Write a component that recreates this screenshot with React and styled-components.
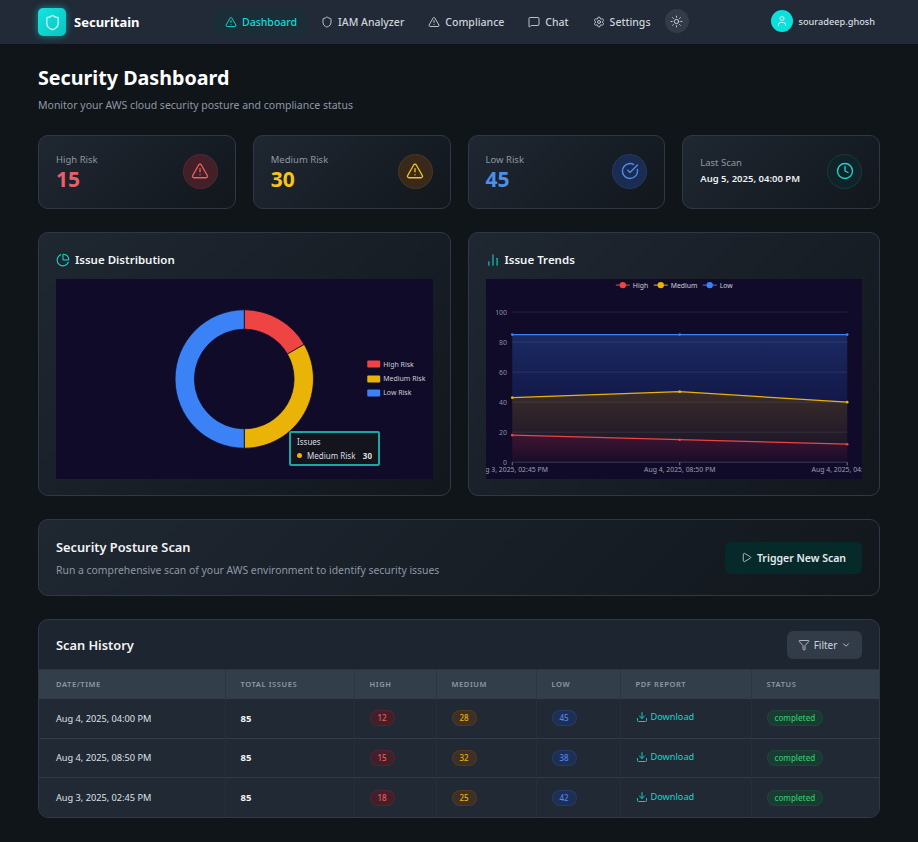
import React from 'react'
import styled, { createGlobalStyle } from 'styled-components'
import {
  TriangleAlert, Shield, MessageSquare, Settings, Sun, User, CircleCheckBig, Clock,
  ChartPie, ChartNoAxesColumn, Play, Filter, ChevronDown, Download,
} from 'lucide-react'

const GlobalStyle = createGlobalStyle`
  * { box-sizing: border-box; }
  html, body { margin: 0; padding: 0; background: #10151a; }
  body { font-family: "Noto Sans", "Open Sans", sans-serif; color: #fff; }
`

const navItems = [
  { label: 'Dashboard', icon: TriangleAlert, active: true },
  { label: 'IAM Analyzer', icon: Shield },
  { label: 'Compliance', icon: TriangleAlert },
  { label: 'Chat', icon: MessageSquare },
  { label: 'Settings', icon: Settings },
]

const stats = [
  { label: 'High Risk', value: 15, color: '#e8606a', bg: '#431f27', ring: '#55292f', icon: TriangleAlert },
  { label: 'Medium Risk', value: 30, color: '#f5c518', bg: '#38291c', ring: '#4a381f', icon: TriangleAlert },
  { label: 'Low Risk', value: 45, color: '#4f8fe8', bg: '#1a2c52', ring: '#223a66', icon: CircleCheckBig },
]

const rows = [
  { date: 'Aug 4, 2025, 04:00 PM', total: 85, high: 12, medium: 28, low: 45 },
  { date: 'Aug 4, 2025, 08:50 PM', total: 85, high: 15, medium: 32, low: 38 },
  { date: 'Aug 3, 2025, 02:45 PM', total: 85, high: 18, medium: 25, low: 42 },
]

const columns = [
  ['DATE/TIME', 186], ['TOTAL ISSUES', 129], ['HIGH', 82], ['MEDIUM', 100],
  ['LOW', 84], ['PDF REPORT', 131], ['STATUS', 128],
]

const tones = {
  high: { bg: '#41202a', border: '#4f262f', color: '#ee5a5f' },
  medium: { bg: '#3d3025', border: '#4c3a24', color: '#eab308' },
  low: { bg: '#1e2f55', border: '#253a66', color: '#4f85e6' },
  done: { bg: '#1b3a34', border: '#1f4438', color: '#34c46e' },
}

const polar = (cx, cy, r, deg) => {
  const a = ((deg - 90) * Math.PI) / 180
  return [cx + r * Math.cos(a), cy + r * Math.sin(a)]
}

const ringSlice = (cx, cy, r0, r1, from, to) => {
  const large = to - from > 180 ? 1 : 0
  const [x1, y1] = polar(cx, cy, r1, from)
  const [x2, y2] = polar(cx, cy, r1, to)
  const [x3, y3] = polar(cx, cy, r0, to)
  const [x4, y4] = polar(cx, cy, r0, from)
  return `M${x1} ${y1}A${r1} ${r1} 0 ${large} 1 ${x2} ${y2}L${x3} ${y3}A${r0} ${r0} 0 ${large} 0 ${x4} ${y4}Z`
}

const DonutChart = () => (
  <ChartSvg viewBox="0 0 378 200">
    <path d={ringSlice(189, 100, 50, 69.5, 0, 60)} fill="#ef4444" stroke="#100b29" strokeWidth="0.8" />
    <path d={ringSlice(189, 100, 50, 69.5, 60, 180)} fill="#eab308" stroke="#100b29" strokeWidth="0.8" />
    <path d={ringSlice(189, 100, 50, 69.5, 180, 360)} fill="#3b82f6" stroke="#100b29" strokeWidth="0.8" />
    {[['High Risk', '#ef4444', 85], ['Medium Risk', '#eab308', 100], ['Low Risk', '#3b82f6', 114]].map(([name, fill, y]) => (
      <g key={name}>
        <rect x="312.5" y={y - 3.5} width="13" height="7" rx="1" fill={fill} />
        <LegendText x="328.5" y={y + 2.5} fill="#c9ced6">{name}</LegendText>
      </g>
    ))}
  </ChartSvg>
)

const xs = [26.3, 194, 361.7]
const toY = (v) => 183.3 - v * 1.503
const linePts = (vals) => vals.map((v, i) => `${xs[i]},${toY(v)}`).join(' ')

const TrendChart = () => {
  const high = [18, 15, 12]
  const medium = [43, 47, 40]
  const low = [85, 85, 85]
  return (
    <ChartSvg viewBox="0 0 377 200">
      <defs>
        <linearGradient id="lowFill" x1="0" y1="0" x2="0" y2="1">
          <stop offset="0" stopColor="#1b2a63" />
          <stop offset="1" stopColor="#131848" />
        </linearGradient>
        <linearGradient id="medFill" x1="0" y1="0" x2="0" y2="1">
          <stop offset="0" stopColor="#3a2c2a" />
          <stop offset="1" stopColor="#1e1728" />
        </linearGradient>
        <linearGradient id="highFill" x1="0" y1="0" x2="0" y2="1">
          <stop offset="0" stopColor="#3f1430" />
          <stop offset="1" stopColor="#170d2a" />
        </linearGradient>
      </defs>
      <polygon points={`${linePts(low)} 361.7,${toY(medium[2])} 194,${toY(medium[1])} 26.3,${toY(medium[0])}`} fill="url(#lowFill)" />
      <polygon points={`${linePts(medium)} 361.7,${toY(high[2])} 194,${toY(high[1])} 26.3,${toY(high[0])}`} fill="url(#medFill)" />
      <polygon points={`${linePts(high)} 361.7,${toY(0)} 26.3,${toY(0)}`} fill="url(#highFill)" />
      {[100, 80, 60, 40, 20, 0].map((v) => (
        <g key={v}>
          <line x1="26.3" x2="361.7" y1={toY(v)} y2={toY(v)} stroke="#8a8fa8" strokeOpacity={v === 0 ? 0.45 : 0.22} strokeWidth="0.8" />
          <ChartText x="21" y={toY(v) + 2.5} fill="#8b90a3" textAnchor="end">{v}</ChartText>
        </g>
      ))}
      {[[high, '#ef4444'], [medium, '#eab308'], [low, '#3b82f6']].map(([vals, color]) => (
        <g key={color}>
          <polyline points={linePts(vals)} fill="none" stroke={color} strokeWidth="1.3" />
          {vals.map((v, i) => <circle key={i} cx={xs[i]} cy={toY(v)} r="1.3" fill={color} />)}
        </g>
      ))}
      {xs.map((x) => <line key={x} x1={x} x2={x} y1="183.3" y2="186.5" stroke="#8a8fa8" strokeWidth="0.8" />)}
      <ChartText x="26.3" y="193.5" fill="#9aa0b0" textAnchor="middle">Aug 3, 2025, 02:45 PM</ChartText>
      <ChartText x="194" y="193.5" fill="#9aa0b0" textAnchor="middle">Aug 4, 2025, 08:50 PM</ChartText>
      <ChartText x="361.7" y="193.5" fill="#9aa0b0" textAnchor="middle">Aug 4, 2025, 04:00 PM</ChartText>
      {[['High', '#ef4444', 137], ['Medium', '#eab308', 175], ['Low', '#3b82f6', 224]].map(([name, color, x]) => (
        <g key={name}>
          <line x1={x - 7} x2={x + 7} y1="6" y2="6" stroke={color} strokeWidth="1" />
          <circle cx={x} cy="6" r="3.2" fill={color} />
          <ChartText x={x + 10} y="8.5" fill="#c9ced6">{name}</ChartText>
        </g>
      ))}
    </ChartSvg>
  )
}

export default function App() {
  return (
    <>
      <GlobalStyle />
      <Header>
        <Brand>
          <LogoMark><Shield size={17} strokeWidth={2} /></LogoMark>
          <BrandName>Securitain</BrandName>
        </Brand>
        <Nav>
          {navItems.map(({ label, icon: Icon, active }) => (
            <NavLink key={label} $active={active}>
              <Icon size={12} strokeWidth={1.8} />
              {label}
            </NavLink>
          ))}
          <ThemeButton><Sun size={13} strokeWidth={1.8} /></ThemeButton>
        </Nav>
        <UserBox>
          <Avatar><User size={12} strokeWidth={2} /></Avatar>
          <UserName>souradeep.ghosh</UserName>
        </UserBox>
      </Header>

      <Main>
        <PageTitle>Security Dashboard</PageTitle>
        <PageSub>Monitor your AWS cloud security posture and compliance status</PageSub>

        <StatGrid>
          {stats.map(({ label, value, color, bg, ring, icon: Icon }) => (
            <StatCard key={label}>
              <StatText>
                <StatLabel>{label}</StatLabel>
                <StatValue $color={color}>{value}</StatValue>
              </StatText>
              <IconCircle $bg={bg} $ring={ring} $color={color}><Icon size={18} strokeWidth={1.8} /></IconCircle>
            </StatCard>
          ))}
          <StatCard>
            <LastScanText>
              <StatLabel>Last Scan</StatLabel>
              <ScanDate>Aug 5, 2025, 04:00 PM</ScanDate>
            </LastScanText>
            <IconCircle $bg="#102329" $ring="#173a3c" $color="#1fd6cf"><Clock size={18} strokeWidth={1.8} /></IconCircle>
          </StatCard>
        </StatGrid>

        <ChartGrid>
          <Panel>
            <PanelTitle><ChartPie size={14} strokeWidth={1.8} />Issue Distribution</PanelTitle>
            <ChartBox>
              <DonutChart />
              <Tooltip>
                <TooltipHead>Issues</TooltipHead>
                <TooltipRow>
                  <TooltipDot />
                  Medium Risk
                  <TooltipValue>30</TooltipValue>
                </TooltipRow>
              </Tooltip>
            </ChartBox>
          </Panel>
          <Panel>
            <PanelTitle><ChartNoAxesColumn size={14} strokeWidth={1.8} />Issue Trends</PanelTitle>
            <ChartBox>
              <TrendChart />
            </ChartBox>
          </Panel>
        </ChartGrid>

        <ScanCard>
          <div>
            <ScanTitle>Security Posture Scan</ScanTitle>
            <ScanText>Run a comprehensive scan of your AWS environment to identify security issues</ScanText>
          </div>
          <TriggerButton><Play size={11} strokeWidth={1.6} />Trigger New Scan</TriggerButton>
        </ScanCard>

        <HistoryCard>
          <HistoryHead>
            <ScanTitle as="h2">Scan History</ScanTitle>
            <FilterButton>
              <Filter size={12} strokeWidth={1.6} />
              Filter
              <ChevronDown size={10} strokeWidth={2} />
            </FilterButton>
          </HistoryHead>
          <Table>
            <colgroup>
              {columns.map(([name, w]) => <col key={name} width={w} />)}
            </colgroup>
            <thead>
              <tr>{columns.map(([name]) => <Th key={name}>{name}</Th>)}</tr>
            </thead>
            <tbody>
              {rows.map((r) => (
                <tr key={r.date}>
                  <Td>{r.date}</Td>
                  <Td><strong>{r.total}</strong></Td>
                  <Td><Badge $tone="high">{r.high}</Badge></Td>
                  <Td><Badge $tone="medium">{r.medium}</Badge></Td>
                  <Td><Badge $tone="low">{r.low}</Badge></Td>
                  <Td><DownloadLink><Download size={12} strokeWidth={1.8} />Download</DownloadLink></Td>
                  <Td><Badge $tone="done">completed</Badge></Td>
                </tr>
              ))}
            </tbody>
          </Table>
        </HistoryCard>
      </Main>
    </>
  )
}

const Header = styled.header`
  height: 44px;
  background: #212a36;
  display: flex;
  align-items: center;
  padding: 0 43px 0 38px;
`
const Brand = styled.div`
  display: flex;
  align-items: center;
  gap: 8px;
  width: 175px;
`
const LogoMark = styled.div`
  width: 28px;
  height: 28px;
  border-radius: 5px;
  background: linear-gradient(135deg, #13e4e0, #0bc4c0);
  box-shadow: 0 0 7px rgba(20, 230, 225, 0.55);
  color: #b9f3f0;
  display: flex;
  align-items: center;
  justify-content: center;
`
const BrandName = styled.span`
  font-size: 13px;
  font-weight: 700;
`
const Nav = styled.nav`
  display: flex;
  align-items: center;
  gap: 1px;
`
const NavLink = styled.a`
  height: 27px;
  padding: 0 11px 0 12px;
  border-radius: 6px;
  display: flex;
  align-items: center;
  gap: 5px;
  font-size: 10.5px;
  font-weight: 500;
  color: ${(p) => (p.$active ? '#14dcd6' : '#cdd3db')};
  background: ${(p) => (p.$active ? '#1b2d37' : 'transparent')};
`
const ThemeButton = styled.button`
  width: 24px;
  height: 24px;
  margin: 0 0 2px 2px;
  padding: 0;
  border: none;
  border-radius: 50%;
  background: #323b47;
  color: #cdd3db;
  display: flex;
  align-items: center;
  justify-content: center;
`
const UserBox = styled.div`
  margin-left: auto;
  margin-bottom: 2px;
  display: flex;
  align-items: center;
  gap: 5px;
`
const Avatar = styled.div`
  width: 22px;
  height: 22px;
  border-radius: 50%;
  background: #0de0dc;
  color: #c6f6f4;
  display: flex;
  align-items: center;
  justify-content: center;
`
const UserName = styled.span`
  font-size: 9.2px;
  font-weight: 500;
  color: #d8dce2;
`
const Main = styled.main`
  padding: 20px 38px 24px;
`
const PageTitle = styled.h1`
  margin: 0;
  font-size: 19.7px;
  line-height: 28px;
  font-weight: 700;
`
const PageSub = styled.p`
  margin: 6px 0 0;
  font-size: 10.5px;
  line-height: 15px;
  color: #8e98a5;
`
const cardSurface = `
  border: 1px solid #2f3844;
  border-radius: 10px;
  background: linear-gradient(135deg, #1f2731 0%, #12171d 100%);
`
const StatGrid = styled.section`
  margin-top: 22px;
  display: grid;
  grid-template-columns: repeat(4, 1fr);
  gap: 17px;
`
const StatCard = styled.div`
  ${cardSurface}
  height: 74px;
  padding: 0 17px 2px;
  display: flex;
  align-items: center;
  justify-content: space-between;
`
const StatText = styled.div`
  padding-top: 2px;
`
const LastScanText = styled.div`
  padding-bottom: 1px;
`
const StatLabel = styled.div`
  font-size: 9.5px;
  line-height: 14px;
  color: #8e98a5;
`
const StatValue = styled.div`
  font-size: 21px;
  line-height: 24px;
  font-weight: 700;
  color: ${(p) => p.$color};
`
const ScanDate = styled.div`
  margin-top: 1px;
  font-size: 9.5px;
  line-height: 15px;
  font-weight: 600;
  color: #eef1f4;
`
const IconCircle = styled.div`
  width: 35px;
  height: 35px;
  border-radius: 50%;
  background: ${(p) => p.$bg};
  border: 1px solid ${(p) => p.$ring};
  color: ${(p) => p.$color};
  display: flex;
  align-items: center;
  justify-content: center;
`
const ChartGrid = styled.section`
  margin-top: 23px;
  display: grid;
  grid-template-columns: 1fr 1fr;
  gap: 17px;
`
const Panel = styled.div`
  ${cardSurface}
  height: 264px;
  padding: 17px;
`
const PanelTitle = styled.h3`
  margin: 0;
  height: 19px;
  display: flex;
  align-items: center;
  gap: 5px;
  font-size: 11.5px;
  font-weight: 600;
  color: #f2f4f6;
  svg { color: #14d8d2; }
`
const ChartBox = styled.div`
  position: relative;
  margin-top: 10px;
  height: 200px;
  background: #100b29;
  overflow: hidden;
`
const ChartSvg = styled.svg`
  display: block;
  width: 100%;
  height: 100%;
`
const ChartText = styled.text`
  font-family: "Noto Sans", sans-serif;
  font-size: 6.9px;
`
const LegendText = styled(ChartText)`
  font-size: 7px;
`
const Tooltip = styled.div`
  position: absolute;
  left: 233px;
  top: 152px;
  width: 91px;
  height: 35px;
  padding: 3px 6px;
  border: 2px solid #14a8a8;
  border-radius: 2px;
  background: #14141c;
  color: #d9dce1;
  font-size: 8px;
`
const TooltipHead = styled.div`
  line-height: 12px;
`
const TooltipRow = styled.div`
  margin-top: 1px;
  display: flex;
  align-items: center;
  line-height: 13px;
`
const TooltipDot = styled.span`
  width: 5px;
  height: 5px;
  margin-right: 5px;
  border-radius: 50%;
  background: #eab308;
`
const TooltipValue = styled.b`
  margin-left: auto;
  font-weight: 700;
`
const ScanCard = styled.section`
  ${cardSurface}
  margin-top: 23px;
  height: 77px;
  padding: 0 17px;
  display: flex;
  align-items: center;
  justify-content: space-between;
`
const ScanTitle = styled.h3`
  margin: 0;
  font-size: 12.8px;
  line-height: 18px;
  font-weight: 600;
  color: #f2f4f6;
`
const ScanText = styled.p`
  margin: 7px 0 0;
  font-size: 10.4px;
  line-height: 14px;
  color: #8e98a5;
`
const TriggerButton = styled.button`
  width: 137px;
  height: 32px;
  border: none;
  border-radius: 6px;
  background: #06292a;
  color: #e6eaee;
  font-family: inherit;
  font-size: 10.5px;
  font-weight: 600;
  display: flex;
  align-items: center;
  justify-content: center;
  gap: 5px;
`
const HistoryCard = styled.section`
  margin-top: 23px;
  border: 1px solid #2f3844;
  border-radius: 10px;
  background: #1d2530;
  overflow: hidden;
`
const HistoryHead = styled.div`
  height: 49px;
  padding: 0 17px;
  display: flex;
  align-items: center;
  justify-content: space-between;
`
const FilterButton = styled.button`
  width: 75px;
  height: 28px;
  border: none;
  border-radius: 6px;
  background: #323c49;
  color: #cdd3db;
  font-family: inherit;
  font-size: 10px;
  display: flex;
  align-items: center;
  justify-content: center;
  gap: 4px;
`
const Table = styled.table`
  width: 100%;
  table-layout: fixed;
  border-collapse: collapse;
`
const Th = styled.th`
  height: 29px;
  padding: 0 15px 1px;
  text-align: left;
  background: #333e4b;
  border-top: 1px solid #2a333f;
  border-left: 1px solid #2c3641;
  color: #8e98a5;
  font-size: 7.5px;
  font-weight: 600;
  letter-spacing: 0.6px;
  &:first-child { padding-left: 17px; border-left: none; }
`
const Td = styled.td`
  height: 39.66px;
  padding: 0 15px;
  background: #202934;
  border-top: 1px solid #323c48;
  border-left: 1px solid #252e39;
  color: #dde1e6;
  font-size: 9.2px;
  &:first-child { padding-left: 17px; border-left: none; }
  strong { color: #f4f5f7; font-size: 9.5px; font-weight: 700; }
  tbody tr:first-child & { border-top: none; }
`
const Badge = styled.span`
  display: inline-block;
  height: 16px;
  padding: 0 8px;
  min-width: 25px;
  text-align: center;
  border-radius: 8px;
  font-size: 8px;
  font-weight: 500;
  line-height: 16px;
  vertical-align: middle;
  background: ${(p) => tones[p.$tone].bg};
  box-shadow: inset 0 0 0 1px ${(p) => tones[p.$tone].border};
  color: ${(p) => tones[p.$tone].color};
`
const DownloadLink = styled.a`
  display: inline-flex;
  align-items: center;
  gap: 3px;
  color: #19d5d0;
  font-size: 9.2px;
`
